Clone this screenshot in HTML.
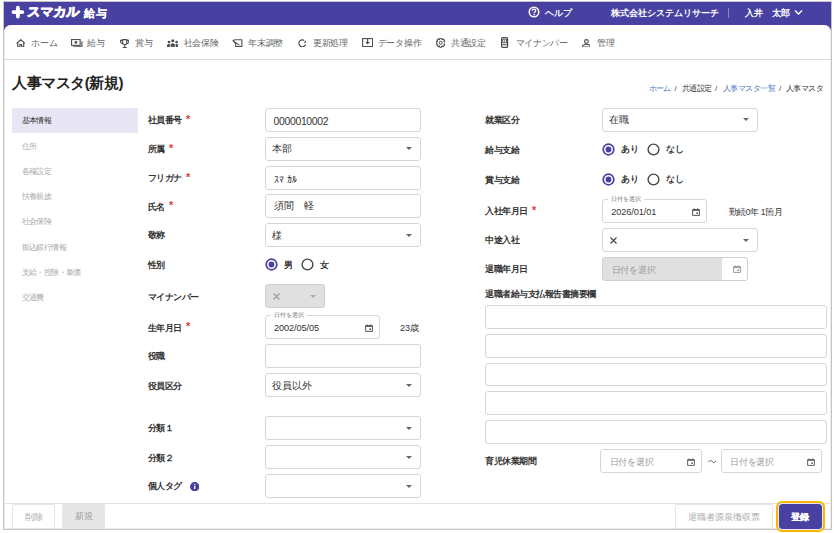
<!DOCTYPE html>
<html><head><meta charset="utf-8">
<style>
*{box-sizing:border-box;margin:0;padding:0}
html,body{width:834px;height:533px;overflow:hidden;background:#fff;font-family:"Liberation Sans",sans-serif;color:#333}
.a{position:absolute}
#frame{position:absolute;left:3px;top:1px;width:829px;height:529px;border:1px solid #c4c4c4;background:#4941a2;overflow:hidden}
#panel{position:absolute;left:4px;top:25.3px;width:827px;height:503.7px;background:#fff;border-radius:7px 7px 0 0;box-shadow:inset 1px 0 #ececec,inset -1px 0 #ececec,inset 0 -1px #ececec}
.hd{position:absolute;color:#fff;font-weight:bold;font-size:9px;line-height:12px;white-space:nowrap}
.nav{position:absolute;top:37px;font-size:9px;letter-spacing:-0.3px;line-height:12px;color:#666;white-space:nowrap}
.lbl{position:absolute;font-size:9px;letter-spacing:-0.5px;font-weight:bold;line-height:12px;color:#333;white-space:nowrap}
.req{color:#e53935;margin-left:4.5px;font-size:11px;font-weight:bold;position:relative;top:-0.2px}
.side{position:absolute;left:21.5px;font-size:8px;letter-spacing:-0.6px;line-height:12px;color:#aaa;white-space:nowrap}
.inp{position:absolute;border:1px solid #d6d6d6;border-radius:3px;background:#fff}
.val{position:absolute;left:8px;top:0;font-size:9.5px;color:#333;white-space:nowrap}
.arr{position:absolute;width:0;height:0;border-left:3px solid transparent;border-right:3px solid transparent;border-top:3px solid #666}
.radio{position:absolute;width:12.5px;height:12.5px;border-radius:50%;border:1.5px solid #444;background:#fff}
.radio.on{border:1.8px solid #4941a2}
.radio.on:after{content:"";position:absolute;left:1.7px;top:1.7px;width:5.5px;height:5.5px;border-radius:50%;background:#4941a2}
.rt{position:absolute;font-size:9px;letter-spacing:-0.4px;font-weight:bold;line-height:12px;color:#3a3a3a;white-space:nowrap}
.cal{position:absolute;width:7px;height:7px;border:1.2px solid #555;border-top-width:2px;border-radius:1px}
.cal:after{content:"";position:absolute;right:0.5px;bottom:0.5px;width:2px;height:2px;background:#555}
.leg{position:absolute;font-size:5.5px;line-height:6px;color:#777;background:#fff;padding:0 2px;white-space:nowrap}
.ph{position:absolute;font-size:8.5px;letter-spacing:-0.2px;color:#aaa;white-space:nowrap}
</style></head><body>
<div id="frame"></div>
<div id="panel"></div>
<svg class="a" style="left:11px;top:5px" width="14" height="14" viewBox="0 0 14 14"><path d="M6.9 2.7V11.6M2.5 7.1H11.3" stroke="#fff" stroke-width="3.9" stroke-linecap="round"/></svg>
<div class="hd" style="left:27px;top:4px;font-size:13px;line-height:16px;font-weight:900;letter-spacing:0px;transform:skewX(-5deg);-webkit-text-stroke:0.8px #fff">スマカル</div>
<div class="hd" style="left:83.5px;top:6.3px;font-size:11px;letter-spacing:1.3px;line-height:15px;font-weight:bold;-webkit-text-stroke:0.15px #fff">給与</div>
<svg class="a" style="left:528px;top:6.2px" width="12" height="12" viewBox="0 0 12 12"><circle cx="6" cy="6" r="4.75" fill="none" stroke="#fff" stroke-width="1.5"/><path d="M4.2 4.7C4.2 3.6 5 3.1 6 3.1S7.8 3.7 7.8 4.6C7.8 5.7 6.2 5.8 6.2 7.2" fill="none" stroke="#fff" stroke-width="1.35"/><circle cx="6.2" cy="8.6" r="0.8" fill="#fff"/></svg>
<div class="hd" style="left:545px;top:6.5px;font-weight:normal;-webkit-text-stroke:0.25px #fff">ヘルプ</div>
<div class="hd" style="left:611px;top:6.5px">株式会社システムリサーチ</div>
<div class="a" style="left:728px;top:8px;width:1px;height:10px;background:#8c86c4"></div>
<div class="hd" style="left:745px;top:6.5px">入井　太郎</div>
<svg class="a" style="left:794px;top:9px" width="9" height="7" viewBox="0 0 9 7"><path d="M1 1.5L4.5 5L8 1.5" fill="none" stroke="#fff" stroke-width="1.4"/></svg>
<svg class="a" style="left:15.5px;top:38.5px" width="9.5" height="8.8" viewBox="0 0 9.5 8.8"><path d="M0.6 4.4L4.75 0.7L8.9 4.4M1.8 3.4V8.2H3.9V5.7H5.6V8.2H7.7V3.4" fill="none" stroke="#4d4d4d" stroke-width="1.15" stroke-linejoin="round"/></svg>
<div class="nav" style="left:31.2px">ホーム</div>
<svg class="a" style="left:71px;top:39px" width="11.5" height="8.3" viewBox="0 0 11.5 8.3"><rect x="0.55" y="0.55" width="8.6" height="5.8" fill="none" stroke="#4d4d4d" stroke-width="1.1"/><circle cx="4.85" cy="3.45" r="1.35" fill="#4d4d4d"/><path d="M2.2 7.7H10.9V2.2" fill="none" stroke="#4d4d4d" stroke-width="1.1"/></svg>
<div class="nav" style="left:87px">給与</div>
<svg class="a" style="left:119.8px;top:38.5px" width="9.4" height="9.2" viewBox="0 0 9.4 9.2"><path d="M2.6 0.6H6.8V3.6A2.1 2.1 0 0 1 2.6 3.6Z" fill="none" stroke="#4d4d4d" stroke-width="1.1"/><path d="M2.6 1.4H0.6V2.7A1.7 1.7 0 0 0 2.7 4.3M6.8 1.4H8.8V2.7A1.7 1.7 0 0 1 6.7 4.3M4.7 5.7V8.2M2.7 8.6H6.7" fill="none" stroke="#4d4d4d" stroke-width="1.1"/></svg>
<div class="nav" style="left:135px">賞与</div>
<svg class="a" style="left:166.8px;top:39px" width="11.6" height="8.3" viewBox="0 0 11.6 8.3"><circle cx="2" cy="3.1" r="1.35" fill="#4d4d4d"/><circle cx="5.8" cy="1.7" r="1.55" fill="#4d4d4d"/><circle cx="9.6" cy="3.1" r="1.35" fill="#4d4d4d"/><path d="M0 8.3V6.5Q0 5.1 2 5.1T4 6.5V8.3ZM7.6 8.3V6.5Q7.6 5.1 9.6 5.1T11.6 6.5V8.3Z" fill="#4d4d4d"/><path d="M3.3 8.3V5.6Q3.3 3.9 5.8 3.9T8.3 5.6V8.3Z" fill="#4d4d4d" stroke="#fff" stroke-width="0.8"/></svg>
<div class="nav" style="left:183.5px">社会保険</div>
<svg class="a" style="left:232px;top:38.5px" width="10.5" height="8.8" viewBox="0 0 10.5 8.8"><path d="M3.3 0.8H9.9V8.1H3.7V4.6M0.6 1.6L3.3 0.8M0.8 1.7L7.4 6.1M0.8 1.7L3.7 4.6" fill="none" stroke="#4d4d4d" stroke-width="1.1" stroke-linejoin="round"/><path d="M3.7 7.6H9.9" stroke="#4d4d4d" stroke-width="1.3"/></svg>
<div class="nav" style="left:248.3px">年末調整</div>
<svg class="a" style="left:297.6px;top:38.5px" width="8.5" height="8.8" viewBox="0 0 8.5 8.8"><path d="M6.3 1.4A3.45 3.45 0 1 0 7.55 5.6" fill="none" stroke="#4d4d4d" stroke-width="1.15"/><path d="M5.6 3.7L8.5 0.9L8.5 3.7Z" fill="#4d4d4d"/></svg>
<div class="nav" style="left:313px">更新処理</div>
<svg class="a" style="left:361.5px;top:38.3px" width="11.2" height="9.2" viewBox="0 0 11.2 9.2"><rect x="0.6" y="0.6" width="10" height="8" fill="none" stroke="#4d4d4d" stroke-width="1.1"/><path d="M5.6 0.6V5.6M3.9 3.9L5.6 5.7L7.3 3.9" fill="none" stroke="#4d4d4d" stroke-width="1.1"/></svg>
<div class="nav" style="left:377.8px">データ操作</div>
<svg class="a" style="left:435.8px;top:38.2px" width="9.5" height="9.5" viewBox="0 0 9.5 9.5"><path d="M7.95 3.60L9.19 3.74L9.19 5.76L7.95 5.90L7.83 6.20L8.60 7.17L7.17 8.60L6.20 7.83L5.90 7.95L5.76 9.19L3.74 9.19L3.60 7.95L3.30 7.83L2.33 8.60L0.90 7.17L1.67 6.20L1.55 5.90L0.31 5.76L0.31 3.74L1.55 3.60L1.67 3.30L0.90 2.33L2.33 0.90L3.30 1.67L3.60 1.55L3.74 0.31L5.76 0.31L5.90 1.55L6.20 1.67L7.17 0.90L8.60 2.33L7.83 3.30Z" fill="none" stroke="#4d4d4d" stroke-width="1.05" stroke-linejoin="round"/><circle cx="4.75" cy="4.75" r="1.45" fill="none" stroke="#4d4d4d" stroke-width="1.0"/></svg>
<div class="nav" style="left:451px">共通設定</div>
<svg class="a" style="left:501.4px;top:37.3px" width="7.2" height="11" viewBox="0 0 7.2 11"><rect x="0.6" y="0.6" width="6" height="9.8" rx="1" fill="none" stroke="#4d4d4d" stroke-width="1.2"/><rect x="1.8" y="2.2" width="3.6" height="3.6" fill="none" stroke="#4d4d4d" stroke-width="0.9"/><rect x="3" y="3.4" width="1.2" height="1.2" fill="#4d4d4d"/><path d="M1.2 7.8H6" stroke="#4d4d4d" stroke-width="1"/></svg>
<div class="nav" style="left:515.6px">マイナンバー</div>
<svg class="a" style="left:581.6px;top:38.5px" width="8.8" height="8.6" viewBox="0 0 8.8 8.6"><circle cx="4.4" cy="2.5" r="1.9" fill="none" stroke="#4d4d4d" stroke-width="1.1"/><path d="M0.6 8V7.3C0.6 5.9 2.4 5.2 4.4 5.2S8.2 5.9 8.2 7.3V8Z" fill="none" stroke="#4d4d4d" stroke-width="1.1"/></svg>
<div class="nav" style="left:597.4px">管理</div>
<div class="a" style="left:4px;top:59px;width:827px;height:1px;background:#dcdcdc"></div>
<div class="a" style="left:12px;top:74px;font-size:15px;letter-spacing:-0.45px;line-height:18px;font-weight:bold;color:#222;white-space:nowrap">人事マスタ(新規)</div>
<div class="a" style="left:648.5px;top:83.3px;font-size:8px;letter-spacing:-0.55px;line-height:12px;color:#4a78c8;white-space:nowrap">ホーム</div>
<div class="a" style="left:674.5px;top:83.3px;font-size:8px;letter-spacing:-0.55px;line-height:12px;color:#444;white-space:nowrap">/</div>
<div class="a" style="left:682px;top:83.3px;font-size:8px;letter-spacing:-0.55px;line-height:12px;color:#333;white-space:nowrap">共通設定</div>
<div class="a" style="left:715px;top:83.3px;font-size:8px;letter-spacing:-0.55px;line-height:12px;color:#444;white-space:nowrap">/</div>
<div class="a" style="left:723px;top:83.3px;font-size:8px;letter-spacing:-0.55px;line-height:12px;color:#4a78c8;white-space:nowrap">人事マスタ一覧</div>
<div class="a" style="left:779px;top:83.3px;font-size:8px;letter-spacing:-0.55px;line-height:12px;color:#444;white-space:nowrap">/</div>
<div class="a" style="left:786px;top:83.3px;font-size:8px;letter-spacing:-0.55px;line-height:12px;color:#333;white-space:nowrap">人事マスタ</div>
<div class="a" style="left:12px;top:108px;width:126px;height:25px;background:#e8e6f4"></div>
<div class="side" style="top:115px;color:#333">基本情報</div>
<div class="side" style="top:140.5px">住所</div>
<div class="side" style="top:165.8px">各種設定</div>
<div class="side" style="top:191.0px">扶養親族</div>
<div class="side" style="top:216.2px">社会保険</div>
<div class="side" style="top:241.5px">振込銀行情報</div>
<div class="side" style="top:266.8px">支給・控除・単価</div>
<div class="side" style="top:292.0px">交通費</div>
<div class="lbl" style="left:147.5px;top:113.3px">社員番号<span class="req">*</span></div>
<div class="inp" style="left:265px;top:107.5px;width:156px;height:24px"><div class="val" style="line-height:22px;font-size:10.4px;letter-spacing:-0.3px;left:7.5px;top:2px">0000010002</div></div>
<div class="lbl" style="left:147.5px;top:142.2px">所属<span class="req">*</span></div>
<div class="inp" style="left:265px;top:136.5px;width:156px;height:24px;"><div class="val" style="line-height:22px;left:6px;top:0.7px;">本部</div><div class="arr" style="right:8.5px;top:9.7px;"></div></div>
<div class="lbl" style="left:147.5px;top:171.0px">フリガナ<span class="req">*</span></div>
<div class="inp" style="left:265px;top:165.5px;width:156px;height:24px"><div class="val" style="line-height:22px;top:2px">ｽﾏ ｶﾙ</div></div>
<div class="lbl" style="left:147.5px;top:199.6px">氏名<span class="req">*</span></div>
<div class="inp" style="left:265px;top:194.3px;width:156px;height:24px"><div class="val" style="line-height:22px;">須間　軽</div></div>
<div class="lbl" style="left:147.5px;top:229.0px">敬称</div>
<div class="inp" style="left:265px;top:223.1px;width:156px;height:24px;"><div class="val" style="line-height:22px;left:6px;top:0.7px;">様</div><div class="arr" style="right:8.5px;top:9.7px;"></div></div>
<div class="lbl" style="left:147.5px;top:258.6px">性別</div>
<svg class="a" style="left:264.7px;top:258.0px" width="13" height="13" viewBox="0 0 13 13"><circle cx="6.5" cy="6.5" r="5.3" fill="#fff" stroke="#4941a2" stroke-width="1.7"/><circle cx="6.5" cy="6.5" r="2.9" fill="#4941a2"/></svg>
<div class="rt" style="left:284px;top:258.5px">男</div>
<svg class="a" style="left:301.3px;top:258.0px" width="13" height="13" viewBox="0 0 13 13"><circle cx="6.5" cy="6.5" r="5.4" fill="#fff" stroke="#444" stroke-width="1.35"/></svg>
<div class="rt" style="left:320.1px;top:258.5px">女</div>
<div class="lbl" style="left:147.5px;top:290.5px">マイナンバー</div>
<div class="inp" style="left:265px;top:284.3px;width:60px;height:23.5px;background:#e0e0e0;border-color:#d0d0d0;"><svg class="a" style="left:6.8px;top:7.45px" width="7" height="7" viewBox="0 0 7 7"><path d="M0.5 0.5L6.5 6.5M6.5 0.5L0.5 6.5" stroke="#9a9a9a" stroke-width="1.15"/></svg><div class="arr" style="right:8.5px;top:9.4px;border-top-color:#aaa"></div></div>
<div class="lbl" style="left:147.5px;top:320.6px">生年月日<span class="req">*</span></div>
<div class="inp" style="left:265px;top:315.3px;width:115px;height:24px"><div class="leg" style="left:5px;top:-4px;padding:0 3px">日付を選択</div><div class="val" style="line-height:24px;top:0px;font-size:9.2px;letter-spacing:-0.1px">2002/05/05</div><svg class="a" style="right:6.5px;top:7.5px" width="8" height="8" viewBox="0 0 8 8"><path d="M0.6 1.6H7.4V7.4H0.6Z" fill="none" stroke="#555" stroke-width="1"/><path d="M0.6 2.3H7.4" stroke="#555" stroke-width="1.2"/><path d="M2.2 0.3V1.6M5.8 0.3V1.6" stroke="#555" stroke-width="0.8"/><rect x="4.4" y="4.4" width="1.6" height="1.6" fill="#555"/></svg></div>
<div class="a" style="left:400px;top:321.5px;font-size:9px;line-height:12px;color:#333">23歳</div>
<div class="lbl" style="left:147.5px;top:350.2px">役職</div>
<div class="inp" style="left:265px;top:344.3px;width:156px;height:24px"></div>
<div class="lbl" style="left:147.5px;top:379.7px">役員区分</div>
<div class="inp" style="left:265px;top:373.3px;width:156px;height:24px;"><div class="val" style="line-height:22px;left:6px;top:0.7px;">役員以外</div><div class="arr" style="right:8.5px;top:9.7px;"></div></div>
<div class="lbl" style="left:147.5px;top:422.0px">分類１</div>
<div class="inp" style="left:265px;top:416.2px;width:156px;height:24px;"><div class="arr" style="right:8.5px;top:9.7px;"></div></div>
<div class="lbl" style="left:147.5px;top:451.6px">分類２</div>
<div class="inp" style="left:265px;top:445.4px;width:156px;height:24px;"><div class="arr" style="right:8.5px;top:9.7px;"></div></div>
<div class="lbl" style="left:147.5px;top:480.4px">個人タグ</div>
<svg class="a" style="left:190px;top:481.5px" width="9.4" height="9.4" viewBox="0 0 9.4 9.4"><circle cx="4.7" cy="4.7" r="4.7" fill="#4941a2"/><rect x="4.05" y="2.1" width="1.3" height="1.1" fill="#fff"/><rect x="4.05" y="3.9" width="1.3" height="3.2" fill="#fff"/></svg>
<div class="inp" style="left:265px;top:474.2px;width:156px;height:24px;"><div class="arr" style="right:8.5px;top:9.7px;"></div></div>
<div class="lbl" style="left:485px;top:114.3px">就業区分</div>
<div class="inp" style="left:602.2px;top:107.8px;width:156px;height:24px;"><div class="val" style="line-height:22px;left:6px;top:0.7px;">在職</div><div class="arr" style="right:8.5px;top:9.7px;"></div></div>
<div class="lbl" style="left:485px;top:143.8px">給与支給</div>
<svg class="a" style="left:601.9000000000001px;top:142.5px" width="13" height="13" viewBox="0 0 13 13"><circle cx="6.5" cy="6.5" r="5.3" fill="#fff" stroke="#4941a2" stroke-width="1.7"/><circle cx="6.5" cy="6.5" r="2.9" fill="#4941a2"/></svg>
<div class="rt" style="left:621.2px;top:143.0px">あり</div>
<svg class="a" style="left:646.7px;top:142.5px" width="13" height="13" viewBox="0 0 13 13"><circle cx="6.5" cy="6.5" r="5.4" fill="#fff" stroke="#444" stroke-width="1.35"/></svg>
<div class="rt" style="left:666px;top:143.0px">なし</div>
<div class="lbl" style="left:485px;top:173.6px">賞与支給</div>
<svg class="a" style="left:601.9000000000001px;top:172.7px" width="13" height="13" viewBox="0 0 13 13"><circle cx="6.5" cy="6.5" r="5.3" fill="#fff" stroke="#4941a2" stroke-width="1.7"/><circle cx="6.5" cy="6.5" r="2.9" fill="#4941a2"/></svg>
<div class="rt" style="left:621.2px;top:173.2px">あり</div>
<svg class="a" style="left:646.7px;top:172.7px" width="13" height="13" viewBox="0 0 13 13"><circle cx="6.5" cy="6.5" r="5.4" fill="#fff" stroke="#444" stroke-width="1.35"/></svg>
<div class="rt" style="left:666px;top:173.2px">なし</div>
<div class="lbl" style="left:485px;top:203.8px">入社年月日<span class="req">*</span></div>
<div class="inp" style="left:602.2px;top:199.2px;width:105px;height:24px"><div class="leg" style="left:5px;top:-4px;padding:0 3px">日付を選択</div><div class="val" style="line-height:24px;top:0px;font-size:9.2px;letter-spacing:-0.1px">2026/01/01</div><svg class="a" style="right:6.5px;top:7.5px" width="8" height="8" viewBox="0 0 8 8"><path d="M0.6 1.6H7.4V7.4H0.6Z" fill="none" stroke="#555" stroke-width="1"/><path d="M0.6 2.3H7.4" stroke="#555" stroke-width="1.2"/><path d="M2.2 0.3V1.6M5.8 0.3V1.6" stroke="#555" stroke-width="0.8"/><rect x="4.4" y="4.4" width="1.6" height="1.6" fill="#555"/></svg></div>
<div class="a" style="left:728.5px;top:205.5px;font-size:8.5px;letter-spacing:-0.35px;line-height:12px;color:#333;white-space:nowrap">勤続0年 1箇月</div>
<div class="lbl" style="left:485px;top:233.9px">中途入社</div>
<div class="inp" style="left:602.2px;top:228.3px;width:156px;height:24px;"><svg class="a" style="left:6.8px;top:7.7px" width="7" height="7" viewBox="0 0 7 7"><path d="M0.5 0.5L6.5 6.5M6.5 0.5L0.5 6.5" stroke="#444" stroke-width="1.15"/></svg><div class="arr" style="right:8.5px;top:9.7px;"></div></div>
<div class="lbl" style="left:485px;top:262.8px">退職年月日</div>
<div class="inp" style="left:602.2px;top:257px;width:145.5px;height:24px;background:#e0e0e0;border-color:#d0d0d0;overflow:hidden"><div class="a" style="right:0;top:0;width:24.5px;height:100%;background:#fff"></div><div class="ph" style="left:8.5px;top:1.2px;line-height:22px;color:#9a9a9a">日付を選択</div><svg class="a" style="right:5.8px;top:7.3px" width="8" height="8" viewBox="0 0 8 8"><path d="M0.6 1.6H7.4V7.4H0.6Z" fill="none" stroke="#9a9a9a" stroke-width="1"/><path d="M0.6 2.3H7.4" stroke="#9a9a9a" stroke-width="1.2"/><path d="M2.2 0.3V1.6M5.8 0.3V1.6" stroke="#9a9a9a" stroke-width="0.8"/><rect x="4.4" y="4.4" width="1.6" height="1.6" fill="#9a9a9a"/></svg></div>
<div class="lbl" style="left:485px;top:288.4px">退職者給与支払報告書摘要欄</div>
<div class="inp" style="left:484.5px;top:305.3px;width:342.5px;height:23.5px"></div>
<div class="inp" style="left:484.5px;top:334.0px;width:342.5px;height:23.5px"></div>
<div class="inp" style="left:484.5px;top:362.7px;width:342.5px;height:23.5px"></div>
<div class="inp" style="left:484.5px;top:391.4px;width:342.5px;height:23.5px"></div>
<div class="inp" style="left:484.5px;top:420.1px;width:342.5px;height:23.5px"></div>
<div class="lbl" style="left:485px;top:455.1px">育児休業期間</div>
<div class="inp" style="left:600px;top:449.4px;width:101.5px;height:23.6px"><div class="ph" style="left:8.5px;top:1.2px;line-height:21.6px;color:#9a9a9a">日付を選択</div><svg class="a" style="right:5.8px;top:7.5px" width="8" height="8" viewBox="0 0 8 8"><path d="M0.6 1.6H7.4V7.4H0.6Z" fill="none" stroke="#666" stroke-width="1"/><path d="M0.6 2.3H7.4" stroke="#666" stroke-width="1.2"/><path d="M2.2 0.3V1.6M5.8 0.3V1.6" stroke="#666" stroke-width="0.8"/><rect x="4.4" y="4.4" width="1.6" height="1.6" fill="#666"/></svg></div>
<svg class="a" style="left:707.5px;top:458.5px" width="8.5" height="5" viewBox="0 0 8.5 5"><path d="M0.5 3.2C1.8 1 3 1 4.25 2.5S6.7 4 8 1.8" fill="none" stroke="#555" stroke-width="0.9"/></svg>
<div class="inp" style="left:720.5px;top:449.4px;width:101px;height:23.6px"><div class="ph" style="left:8.5px;top:1.2px;line-height:21.6px;color:#9a9a9a">日付を選択</div><svg class="a" style="right:5.8px;top:7.5px" width="8" height="8" viewBox="0 0 8 8"><path d="M0.6 1.6H7.4V7.4H0.6Z" fill="none" stroke="#666" stroke-width="1"/><path d="M0.6 2.3H7.4" stroke="#666" stroke-width="1.2"/><path d="M2.2 0.3V1.6M5.8 0.3V1.6" stroke="#666" stroke-width="0.8"/><rect x="4.4" y="4.4" width="1.6" height="1.6" fill="#666"/></svg></div>
<div class="a" style="left:4px;top:503px;width:827px;height:1px;background:#e3e3e3"></div>
<div class="inp" style="left:12px;top:504px;width:43px;height:24.5px;border-color:#e6e6e6;border-radius:2px;font-size:8.5px;line-height:24.5px;text-align:center;color:#aaa">削除</div>
<div class="a" style="left:62px;top:504px;width:43px;height:24.5px;background:#e6e6e6;border-radius:2px;font-size:8.5px;line-height:25.5px;text-align:center;color:#999">新規</div>
<div class="inp" style="left:674.5px;top:504px;width:98.5px;height:24.5px;border-color:#e6e6e6;border-radius:2px;font-size:8.8px;line-height:24.5px;text-align:center;color:#aaa">退職者源泉徴収票</div>
<div class="a" style="left:776px;top:501px;width:48.7px;height:30.7px;border:2.4px solid #f8b700;border-radius:6px;background:#e8e4f4"><div class="a" style="left:0.5px;top:0.5px;right:0.5px;bottom:0.5px;border-radius:3.5px;background:#4941a2"></div></div>
<div class="a" style="left:778.6px;top:504.5px;width:43.6px;height:24.5px;font-size:9px;line-height:24px;text-align:center;color:#fff;font-weight:bold;-webkit-text-stroke:0.2px #fff">登録</div>
</body></html>
